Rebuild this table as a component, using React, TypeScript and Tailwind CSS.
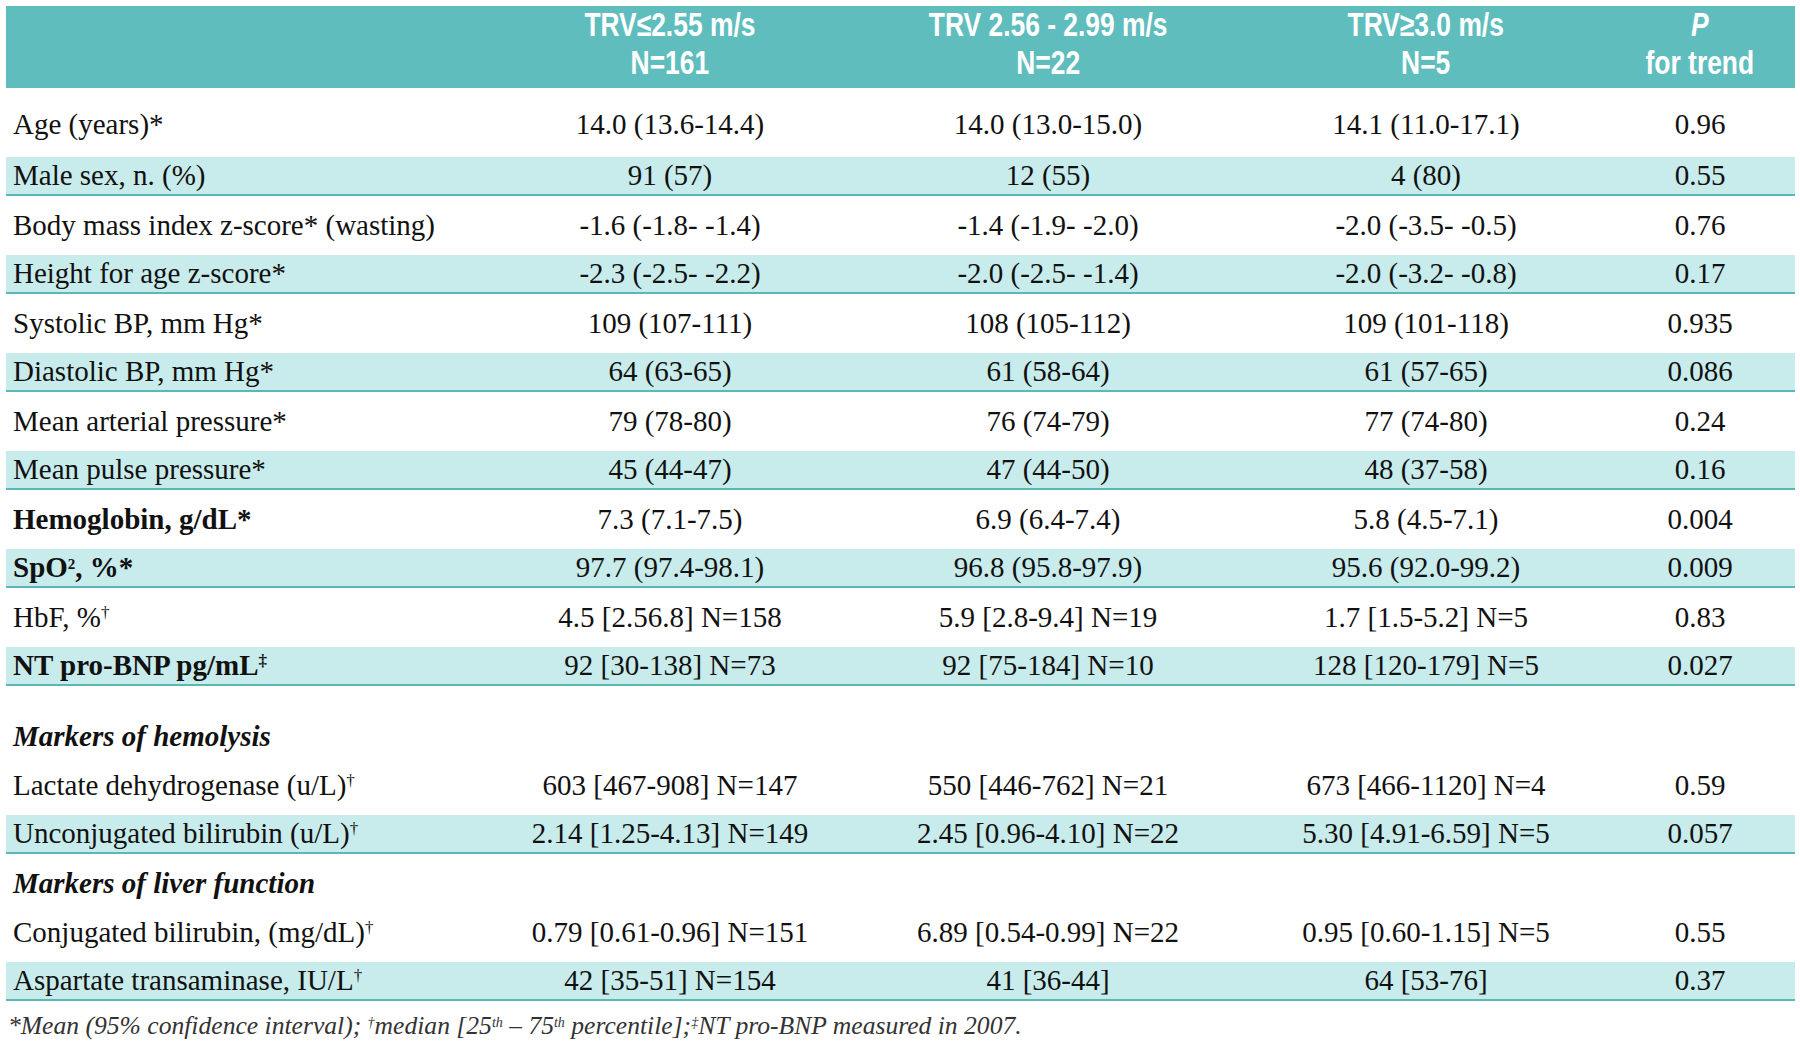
import React from "react";

type Row = {
  label: React.ReactNode;
  values: string[];
  shade?: boolean;
  bold?: boolean;
  first?: boolean;
};

const grid = "grid grid-cols-[475px_378px_378px_378px_180px]";

const mainRows: Row[] = [
  { label: "Age (years)*", values: ["14.0 (13.6-14.4)", "14.0 (13.0-15.0)", "14.1 (11.0-17.1)", "0.96"], first: true },
  { label: "Male sex, n. (%)", values: ["91 (57)", "12 (55)", "4 (80)", "0.55"], shade: true },
  { label: "Body mass index z-score* (wasting)", values: ["-1.6 (-1.8- -1.4)", "-1.4 (-1.9- -2.0)", "-2.0 (-3.5- -0.5)", "0.76"] },
  { label: "Height for age z-score*", values: ["-2.3 (-2.5- -2.2)", "-2.0 (-2.5- -1.4)", "-2.0 (-3.2- -0.8)", "0.17"], shade: true },
  { label: "Systolic BP, mm Hg*", values: ["109 (107-111)", "108 (105-112)", "109 (101-118)", "0.935"] },
  { label: "Diastolic BP, mm Hg*", values: ["64 (63-65)", "61 (58-64)", "61 (57-65)", "0.086"], shade: true },
  { label: "Mean arterial pressure*", values: ["79 (78-80)", "76 (74-79)", "77 (74-80)", "0.24"] },
  { label: "Mean pulse pressure*", values: ["45 (44-47)", "47 (44-50)", "48 (37-58)", "0.16"], shade: true },
  { label: "Hemoglobin, g/dL*", values: ["7.3 (7.1-7.5)", "6.9 (6.4-7.4)", "5.8 (4.5-7.1)", "0.004"], bold: true },
  {
    label: (
      <>
        SpO<sup className="text-[15px]">2</sup>, %*
      </>
    ),
    values: ["97.7 (97.4-98.1)", "96.8 (95.8-97.9)", "95.6 (92.0-99.2)", "0.009"],
    shade: true,
    bold: true,
  },
  {
    label: (
      <>
        HbF, %<sup className="text-[17px]">†</sup>
      </>
    ),
    values: ["4.5 [2.56.8] N=158", "5.9 [2.8-9.4] N=19", "1.7 [1.5-5.2] N=5", "0.83"],
  },
  {
    label: (
      <>
        NT pro-BNP pg/mL<sup className="text-[17px]">‡</sup>
      </>
    ),
    values: ["92 [30-138] N=73", "92 [75-184] N=10", "128 [120-179] N=5", "0.027"],
    shade: true,
    bold: true,
  },
];

const hemolysis: Row[] = [
  {
    label: (
      <>
        Lactate dehydrogenase (u/L)<sup className="text-[17px]">†</sup>
      </>
    ),
    values: ["603 [467-908] N=147", "550 [446-762] N=21", "673 [466-1120] N=4", "0.59"],
  },
  {
    label: (
      <>
        Unconjugated bilirubin (u/L)<sup className="text-[17px]">†</sup>
      </>
    ),
    values: ["2.14 [1.25-4.13] N=149", "2.45 [0.96-4.10] N=22", "5.30 [4.91-6.59] N=5", "0.057"],
    shade: true,
  },
];

const liver: Row[] = [
  {
    label: (
      <>
        Conjugated bilirubin, (mg/dL)<sup className="text-[17px]">†</sup>
      </>
    ),
    values: ["0.79 [0.61-0.96] N=151", "6.89 [0.54-0.99] N=22", "0.95 [0.60-1.15] N=5", "0.55"],
  },
  {
    label: (
      <>
        Aspartate transaminase, IU/L<sup className="text-[17px]">†</sup>
      </>
    ),
    values: ["42 [35-51] N=154", "41 [36-44]", "64 [53-76]", "0.37"],
    shade: true,
  },
];

function DataRow({ row }: { row: Row }) {
  const size = row.shade
    ? "h-[39px] bg-[#c8ebeb] border-b-2 border-[#5cb8b6]"
    : row.first
    ? "h-[63px] pb-[2px]"
    : "h-[59px]";
  return (
    <div className={`${grid} items-center ${size}`}>
      <div className={`pl-[7px] pb-[2px] whitespace-nowrap ${row.bold ? "font-bold" : ""}`}>{row.label}</div>
      {row.values.map((v, i) => (
        <div key={i} className={`text-center pb-[2px] whitespace-nowrap ${i === 3 ? "pr-[10px]" : ""}`}>
          {v}
        </div>
      ))}
    </div>
  );
}

function SectionTitle({ children }: { children: React.ReactNode }) {
  return (
    <div className="h-[49px] flex items-end pb-[5px] pl-[7px] font-bold italic whitespace-nowrap">
      {children}
    </div>
  );
}

function HeadCell({ children }: { children: React.ReactNode }) {
  return (
    <div className="flex justify-center whitespace-nowrap">
      <div className="scale-x-[0.8] text-center">{children}</div>
    </div>
  );
}

export default function App() {
  const head = [
    ["TRV≤2.55 m/s", "N=161"],
    ["TRV 2.56 - 2.99 m/s", "N=22"],
    ["TRV≥3.0 m/s", "N=5"],
  ];

  return (
    <div className="w-[1800px] h-[1053px] bg-white overflow-hidden">
      <div className="ml-[6px] pt-[6px] w-[1789px] font-['Liberation_Serif',serif] text-[29px] leading-[30px] text-[#111]">
        {/* header */}
        <div
          className={`${grid} h-[82px] bg-[#5fbebd] text-white font-bold text-[33px] leading-[38px] font-['Liberation_Sans',Arial,sans-serif]`}
        >
          <div />
          {head.map(([a, b]) => (
            <HeadCell key={b}>
              <div>{a}</div>
              <div>{b}</div>
            </HeadCell>
          ))}
          <div className="pr-[10px]">
            <HeadCell>
              <div className="italic">P</div>
              <div>for trend</div>
            </HeadCell>
          </div>
        </div>

        <div className="mt-[6px]">
          {mainRows.map((r, i) => (
            <DataRow key={i} row={r} />
          ))}
        </div>

        <div className="mt-[21px]">
          <SectionTitle>Markers of hemolysis</SectionTitle>
          {hemolysis.map((r, i) => (
            <DataRow key={i} row={r} />
          ))}
          <SectionTitle>Markers of liver function</SectionTitle>
          {liver.map((r, i) => (
            <DataRow key={i} row={r} />
          ))}
        </div>

        <div className="mt-[11px] pl-[2px] italic text-[25.6px] leading-[28px] text-[#333] whitespace-nowrap">
          *Mean (95% confidence interval); <sup className="text-[14px]">†</sup>median [25
          <sup className="text-[14px]">th</sup> – 75<sup className="text-[14px]">th</sup> percentile];
          <sup className="text-[14px]">‡</sup>NT pro-BNP measured in 2007.
        </div>
      </div>
    </div>
  );
}
